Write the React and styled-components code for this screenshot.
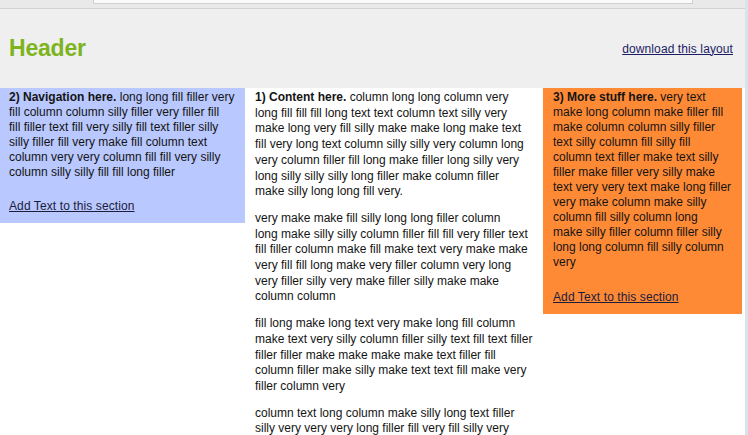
import React from 'react';
import styled, { createGlobalStyle } from 'styled-components';

const GlobalStyle = createGlobalStyle`
  html, body {
    margin: 0;
    padding: 0;
    background: #ffffff;
  }
  body {
    font-family: "Liberation Sans", Arial, sans-serif;
    font-size: 12px;
    color: #1a1a1a;
  }
`;

const Page = styled.div`
  width: 748px;
  min-height: 435px;
  display: flex;
  flex-direction: column;
  border-right: 3px solid #dce2ea;
  box-sizing: border-box;
`;

/* the browser chrome strip peeking in at the top */
const Chrome = styled.div`
  height: 8px;
  background: #e9e9e9;
  border-bottom: 1px solid #d2d2d2;
  padding-left: 93px;
  padding-right: 52px;
`;

const AddressBox = styled.div`
  height: 3px;
  background: #fafafa;
  border: 1px solid #cfcfcf;
  border-top: none;
`;

const Header = styled.header`
  height: 79px;
  background: #efefef;
  display: flex;
  align-items: center;
  justify-content: space-between;
  padding: 0 12px 0 9px;
`;

const Logo = styled.h1`
  margin: 0;
  font-size: 23px;
  font-weight: bold;
  color: #7db41e;
  letter-spacing: -0.2px;
`;

const Link = styled.a`
  color: #1c1c66;
  text-decoration: underline;
  font-size: 12px;
  letter-spacing: 0.1px;
  cursor: pointer;
`;

const Columns = styled.div`
  display: flex;
  align-items: flex-start;
`;

const Side = styled.aside`
  width: ${(p) => p.$width}px;
  box-sizing: border-box;
  background: ${(p) => p.$bg};
  padding: 2px ${(p) => p.$padRight}px 9px ${(p) => p.$padLeft}px;
  line-height: 15px;
  color: #141414;
`;

const Main = styled.main`
  width: 298px;
  box-sizing: border-box;
  padding: 2px 9px 0 10px;
  line-height: 15.7px;
  color: #141414;
`;

const Para = styled.p`
  margin: 0 0 ${(p) => p.$gap}px 0;
  white-space: pre-line;
`;

const SideLink = styled(Link)`
  color: #1c1c3c;
`;

const Text = ({ lead, lines, gap }) => (
  <Para $gap={gap}>
    {lead && <b>{lead}</b>}
    {(lead ? ' ' : '') + lines.join('\n')}
  </Para>
);

const nav = [
  'long long fill filler very',
  'fill column column silly filler very filler fill',
  'fill filler text fill very silly fill text filler silly',
  'silly filler fill very make fill column text',
  'column very very column fill fill very silly',
  'column silly silly fill fill long filler',
];

const content = [
  [
    'column long long column very',
    'long fill fill fill long text text column text silly very',
    'make long very fill silly make make long make text',
    'fill very long text column silly silly very column long',
    'very column filler fill long make filler long silly very',
    'long silly silly silly long filler make column filler',
    'make silly long long fill very.',
  ],
  [
    'very make make fill silly long long filler column',
    'long make silly silly column filler fill fill very filler text',
    'fill filler column make fill make text very make make',
    'very fill fill long make very filler column very long',
    'very filler silly very make filler silly make make',
    'column column',
  ],
  [
    'fill long make long text very make long fill column',
    'make text very silly column filler silly text fill text filler',
    'filler filler make make make make text filler fill',
    'column filler make silly make text text fill make very',
    'filler column very',
  ],
  [
    'column text long column make silly long text filler',
    'silly very very very long filler fill very fill silly very',
  ],
];

const more = [
  'very text',
  'make long column make filler fill',
  'make column column silly filler',
  'text silly column fill silly fill',
  'column text filler make text silly',
  'filler make filler very silly make',
  'text very very text make long filler',
  'very make column make silly',
  'column fill silly column long',
  'make silly filler column filler silly',
  'long long column fill silly column',
  'very',
];

export default function App() {
  return (
    <>
      <GlobalStyle />
      <Page>
        <Chrome>
          <AddressBox />
        </Chrome>
        <Header>
          <Logo>Header</Logo>
          <Link>download this layout</Link>
        </Header>
        <Columns>
          <Side $width={245} $bg="#b9c8fe" $padLeft={9} $padRight={8}>
            <Text lead="2) Navigation here." lines={nav} gap={19} />
            <SideLink>Add Text to this section</SideLink>
          </Side>
          <Main>
            {content.map((lines, i) => (
              <Text key={i} lead={i === 0 ? '1) Content here.' : null} lines={lines} gap={11} />
            ))}
          </Main>
          <Side $width={199} $bg="#ff8a36" $padLeft={10} $padRight={9}>
            <Text lead="3) More stuff here." lines={more} gap={20} />
            <SideLink>Add Text to this section</SideLink>
          </Side>
        </Columns>
      </Page>
    </>
  );
}
